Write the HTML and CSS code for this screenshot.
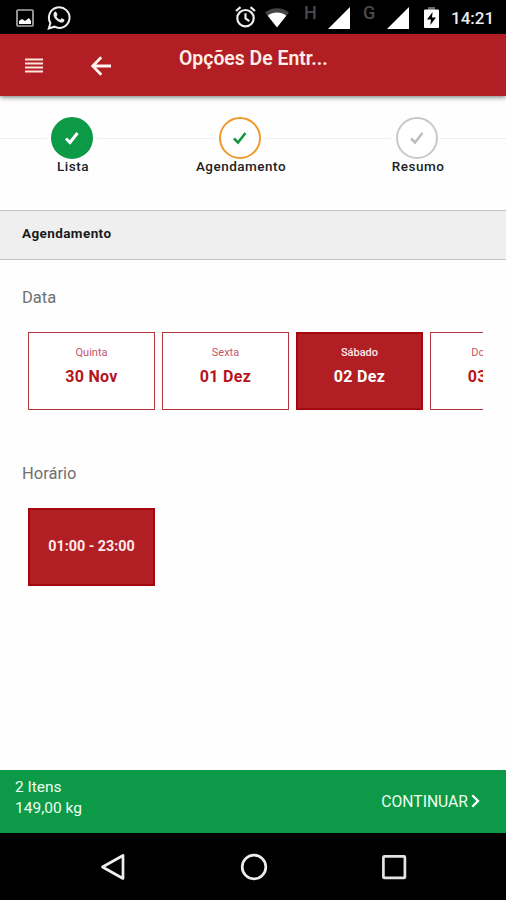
FILE: index.html
```html
<!DOCTYPE html>
<html lang="pt-BR">
<head>
<meta charset="utf-8">
<title>Opções De Entrega</title>
<link rel="stylesheet" href="styles.css">
</head>
<body>
<div class="screen">
  <div class="status">
    <svg class="s-img" width="18" height="18" viewBox="0 0 18 18"><rect x="1" y="1" width="16" height="16" rx="1" fill="none" stroke="#aaa" stroke-width="1.7"/><path d="M3 15v-3l3-2 3 2 4-3 2 3v3z" fill="#fff"/></svg>
    <svg class="s-wa" width="24" height="26" viewBox="0 0 24 26"><path d="M1.8 23.5l1.6-5.6A10.3 10.3 0 1 1 7.4 21.7z" fill="none" stroke="#eee" stroke-width="2"/><path d="M7.3 7.2c.8-.9 1.8-.7 2.1 0l1 2.2c.2.6-.8 1.3-1 1.8.9 1.7 2.1 2.8 3.8 3.5.7-.4 1-1.6 1.7-1.4l2.3 1.2c.6.5 0 2.1-1 2.7-1.3.8-3.2.3-5.2-.9-2.2-1.4-3.9-3.7-4.4-5.5-.3-1.5 0-2.8.7-3.6z" fill="#eee"/></svg>
    <svg class="s-alarm" width="21" height="22" viewBox="0 0 21 22"><g fill="none" stroke="#eee" stroke-width="2.2"><circle cx="10.5" cy="12.2" r="8.2"/><path d="M1 5l4.5-3.8M20 5l-4.5-3.8M10.5 7.2v5.2l3.8 2.8"/></g></svg>
    <svg class="s-wifi" width="24" height="20" viewBox="0 0 24 20"><path d="M0 4.5C7-1.2 17-1.2 24 4.5L12 19z" fill="#444"/><path d="M2.8 7.8c5-4.300 13.400-4.300 18.400 0L12 19.500z" fill="#fff"/></svg>
    <span class="net net-h">H</span>
    <svg class="s-sig1" width="22" height="22" viewBox="0 0 23 22" preserveAspectRatio="none"><path d="M0 22L23 0v22z" fill="#fff"/></svg>
    <span class="net net-g">G</span>
    <svg class="s-sig2" width="22" height="22" viewBox="0 0 22 22"><path d="M0 22L22 0v22z" fill="#fff"/></svg>
    <svg class="s-bat" width="15" height="21" viewBox="0 0 15 21"><path d="M4 0h7v3H4z" fill="#666"/><path d="M1 2.500h13q1 0 1 1V20q0 1-1 1H1q-1 0-1-1V3.500q0-1 1-1z" fill="#fff"/><path d="M8.600 5L3 12.500h4L6.300 18l5.700-7.500H8z" fill="#000"/></svg>
    <span class="time">14:21</span>
  </div>

  <header class="appbar">
    <svg class="menu" width="18" height="15" viewBox="0 0 18 15"><path d="M0 1.500h18M0 5.500h18M0 9.500h18M0 13.500h18" stroke="#ffe4dc" stroke-width="2"/></svg>
    <svg class="back" width="20" height="20" viewBox="0 0 20 20"><path d="M20 10H2M10.300 1.300L1.700 10l8.600 8.700" fill="none" stroke="#fff3ee" stroke-width="2.800"/></svg>
    <h1 class="title">Opções De Entr...</h1>
  </header>

  <div class="steps">
    <i class="line l1"></i>
    <div class="step done"><span class="dot"><svg width="16" height="14" viewBox="0 0 16 14"><path d="M2 7.500l4 4L13.500 2"/></svg></span><span class="name">Lista</span></div>
    <i class="line l2"></i>
    <div class="step current"><span class="dot"><svg width="16" height="14" viewBox="0 0 16 14"><path d="M2 7.500l4 4L13.500 2"/></svg></span><span class="name">Agendamento</span></div>
    <i class="line l3"></i>
    <div class="step todo"><span class="dot"><svg width="16" height="14" viewBox="0 0 16 14"><path d="M2 7.500l4 4L13.500 2"/></svg></span><span class="name">Resumo</span></div>
    <i class="line l4"></i>
  </div>

  <div class="section">Agendamento</div>

  <main class="content">
    <h2 class="label">Data</h2>
    <div class="row">
      <div class="card"><span class="day">Quinta</span><span class="date">30 Nov</span></div>
      <div class="card"><span class="day">Sexta</span><span class="date">01 Dez</span></div>
      <div class="card selected"><span class="day">Sábado</span><span class="date">02 Dez</span></div>
      <div class="card"><span class="day">Domingo</span><span class="date">03 Dez</span></div>
    </div>
    <h2 class="label second">Horário</h2>
    <div class="row">
      <div class="card selected slot">01:00 - 23:00</div>
    </div>
  </main>

  <footer class="cart">
    <div class="sum"><div class="items">2 Itens</div><div class="weight">149,00 kg</div></div>
    <div class="go"><span>CONTINUAR</span><svg width="9" height="14" viewBox="0 0 9 14"><path d="M1.300 1.200L7 7l-5.700 5.800" fill="none" stroke="#fff" stroke-width="2.300"/></svg></div>
  </footer>

  <nav class="nav">
    <svg width="26" height="28" viewBox="0 0 26 28"><path d="M2.500 14L23 2.500v23z" fill="none" stroke="#eee" stroke-width="2.700" stroke-linejoin="round"/></svg>
    <svg width="28" height="28" viewBox="0 0 28 28"><circle cx="14" cy="14" r="11.800" fill="none" stroke="#eee" stroke-width="2.700"/></svg>
    <svg width="26" height="28" viewBox="0 0 26 28"><rect x="2.400" y="3.400" width="21.500" height="21.500" rx="1" fill="none" stroke="#e4e4e4" stroke-width="2.700"/></svg>
  </nav>
</div>
</body>
</html>
```
FILE: styles.css
```css
* { box-sizing: border-box; }
body { margin: 0; font-family: Roboto, "Liberation Sans", sans-serif; background: #fefefe; }
svg { display: block; flex: none; }
.screen { width: 506px; height: 900px; display: flex; flex-direction: column; overflow: hidden; }

.status { height: 34px; flex: none; background: #000; display: flex; align-items: flex-start; }
.s-img { margin: 9px 0 0 16px; }
.s-wa { margin: 5px 0 0 13px; }
.s-alarm { margin: 6px 0 0 164px; }
.s-wifi { margin: 8px 0 0 9px; }
.net { color: #4a4a4a; font-size: 18px; font-weight: 500; line-height: 20px; margin-top: 3px; }
.net-h { width: 24px; margin-left: 15px; }
.net-g { width: 24px; margin-left: 13px; }
.s-sig1, .s-sig2 { margin-top: 7px; }
.s-bat { margin: 7px 0 0 15px; }
.time { margin: 7px 0 0 12px; color: #eee; font-size: 17px; font-weight: 500; line-height: 22px; }

.appbar { height: 62px; flex: none; background: #b11f24; display: flex; align-items: flex-start; box-shadow: 0 1px 5px rgba(0, 20, 10, .6); position: relative; }
.menu { margin: 24px 0 0 25px; }
.back { margin: 22px 0 0 48px; }
.title { margin: 13px 0 0 68px; font-size: 19.400px; line-height: 24px; font-weight: 600; color: #ffeee8; white-space: nowrap; }

.steps { height: 114px; flex: none; display: flex; align-items: flex-start; padding-top: 21px; }
.line { height: 1px; background: #eeeeee; }
.l1 { width: 47px; margin: 21px 4px 0 0; }
.l2 { width: 118px; margin: 21px 4px 0; }
.l3 { width: 126px; margin: 21px 5px 0 4px; }
.l4 { flex: 1; margin: 21px 0 0 2px; }
.step { width: 42px; flex: none; display: flex; flex-direction: column; align-items: center; }
.dot { width: 42px; height: 42px; border-radius: 50%; display: flex; align-items: center; justify-content: center; border: 2px solid #c8c8c8; background: #fff; }
.dot svg { fill: none; stroke: #bdbdbd; stroke-width: 2.500; }
.done .dot { background: #0d9a47; border-color: #0d9a47; }
.done .dot svg { stroke: #fff; stroke-width: 3; }
.current .dot { border-color: #f0992a; }
.current .dot svg { stroke: #15953f; }
.name { font-size: 13.500px; letter-spacing: .5px; line-height: 18px; font-weight: 500; color: #222; margin: -2px 0 0 2px; white-space: nowrap; }

.section { height: 50px; flex: none; background: #efefef; border-top: 1px solid #c4c4c4; border-bottom: 1px solid #c4c4c4; padding: 13px 22px; font-size: 13.500px; letter-spacing: .4px; line-height: 18px; font-weight: 700; color: #1a1a1a; }

.content { flex: 1; padding: 28px 23px 0 22px; }
.label { margin: 0; font-size: 16.500px; line-height: 20px; font-weight: 400; color: #707070; }
.second { margin-top: 54px; }
.row { display: flex; gap: 7px; overflow: hidden; margin-top: 24px; padding-left: 6px; }
.card { width: 127px; height: 78px; flex: none; border: 1px solid #b5343c; display: flex; flex-direction: column; align-items: center; padding-top: 13px; color: #b5141c; background: #fff; }
.day { font-size: 11px; line-height: 14px; color: #c4566a; }
.date { font-size: 16px; letter-spacing: .3px; line-height: 20px; font-weight: 700; margin-top: 7px; }
.selected { background: #b11f24; border: 2px solid #a5070d; color: #fff; padding-top: 12px; }
.selected .day { color: #ffe8e8; font-weight: 500; }
.slot { justify-content: center; padding: 0 0 3px; font-size: 14.300px; font-weight: 700; color: #ffeaea; }

.cart { height: 63px; flex: none; background: #0c9a48; color: #effff0; display: flex; justify-content: space-between; padding: 7px 26px 0 15px; font-size: 15.500px; line-height: 21px; }
.go { display: flex; align-items: center; gap: 3px; height: 48px; font-size: 15.700px; }
.go span { white-space: nowrap; }

.nav { height: 67px; flex: none; background: #000; display: flex; justify-content: space-between; padding: 20px 99px 0 100px; }
```
